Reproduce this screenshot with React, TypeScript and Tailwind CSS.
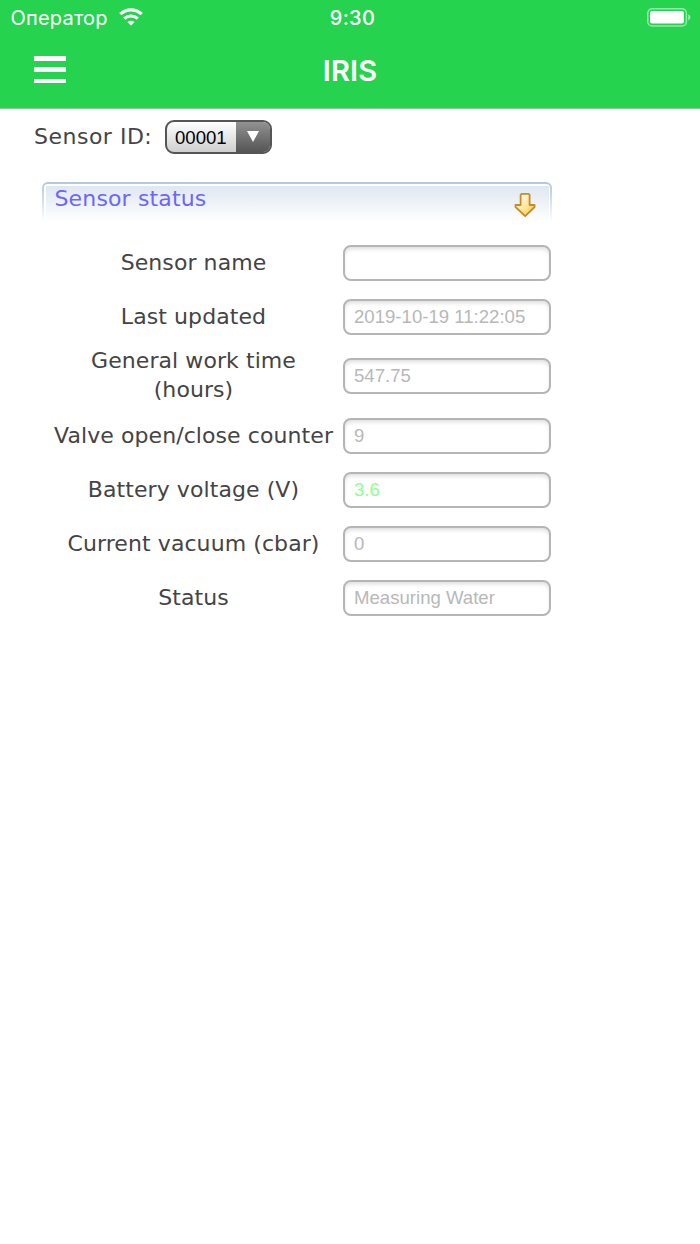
import clsx from 'clsx'

const FIELDS = [
  { label: 'Sensor name', value: '' },
  { label: 'Last updated', value: '2019-10-19 11:22:05' },
  { label: 'General work time (hours)', value: '547.75', tall: true },
  { label: 'Valve open/close counter', value: '9' },
  { label: 'Battery voltage (V)', value: '3.6', ok: true },
  { label: 'Current vacuum (cbar)', value: '0' },
  { label: 'Status', value: 'Measuring Water' },
]

function WifiIcon() {
  return (
    <svg className="ml-[11px] mt-2 h-[18px] w-6" viewBox="0 0 24 18" fill="none" stroke="#fff">
      <path d="M1.3 6.2C7.3.4 16.7.4 22.7 6.2" strokeWidth="3.2" />
      <path d="M5.2 10.7C9.1 7.1 14.9 7.1 18.8 10.7" strokeWidth="3.1" />
      <path d="M12 17.6 8.4 14C10.5 12.2 13.5 12.2 15.6 14Z" fill="#fff" stroke="none" />
    </svg>
  )
}

function BatteryIcon() {
  return (
    <svg className="mt-2 h-[19px] w-11" viewBox="0 0 44 19" fill="none">
      <rect x="0.8" y="0.8" width="38.6" height="17.2" rx="4.3" stroke="#fff" strokeOpacity="0.5" strokeWidth="1.5" />
      <rect x="3" y="3" width="34" height="12.5" rx="2" fill="#fff" />
      <path d="M41.3 6.2Q43.4 7.2 43.4 9.3T41.3 12.4Z" fill="#fff" fillOpacity="0.6" />
    </svg>
  )
}

function ArrowIcon() {
  return (
    <svg className="mr-3 mt-[6px] h-[26px] w-6" viewBox="0 0 24 26">
      <defs>
        <linearGradient id="arrow" x1="0" y1="0" x2="1" y2="1">
          <stop offset="0.2" stopColor="#fffbe2" />
          <stop offset="1" stopColor="#ffc83d" />
        </linearGradient>
      </defs>
      <path
        d="M7.6 2.8 8.6 1.8H15.6L16.6 2.8V13H21.6V15L12.2 24.2 2.5 15V13H7.6Z"
        fill="url(#arrow)"
        stroke="#c58c29"
        strokeWidth="1.8"
        strokeLinejoin="round"
      />
    </svg>
  )
}

function Header() {
  return (
    <header className="h-[109px] border-b border-[#8bc79b] bg-[#26d34f] font-['Inter',sans-serif] text-white">
      <div className="grid h-9 grid-cols-[1fr_auto_1fr]">
        <div className="flex pl-[10.5px]">
          <span className="text-[20px] leading-9 tracking-[0.2px]">Оператор</span>
          <WifiIcon />
        </div>
        <span className="pl-[5px] text-[20px] font-medium leading-9 tracking-[0.4px]">9:30</span>
        <div className="flex justify-end pr-[9px]">
          <BatteryIcon />
        </div>
      </div>
      <div className="grid h-[72px] grid-cols-[1fr_auto_1fr]">
        <button className="ml-[34px] mt-5 flex h-[27px] w-8 flex-col justify-between" aria-label="Menu">
          <span className="h-[4.5px] w-full bg-white" />
          <span className="h-[4.5px] w-full bg-white" />
          <span className="h-[4.5px] w-full bg-white" />
        </button>
        <h1 className="text-[29px] font-semibold leading-[70px] tracking-[0.2px]">IRIS</h1>
        <span />
      </div>
    </header>
  )
}

function SensorPicker() {
  return (
    <div className="flex h-[73px] pl-[34px] pt-[11px]">
      <span className="w-[131px] text-[22px] leading-[34px] tracking-[0.5px]">Sensor ID:</span>
      <button className="flex h-[34px] w-[107px] overflow-hidden rounded-[9px] border-2 border-[#555] bg-linear-to-b from-white to-[#cfcfcf] font-['Liberation_Sans',sans-serif] text-black">
        <span className="w-[69px] pl-2 text-left text-[18.6px] leading-[31px]">00001</span>
        <span className="flex h-full flex-1 items-center justify-center bg-linear-to-b from-[#929292] to-[#555]">
          <svg className="size-3" viewBox="0 0 12 12">
            <path d="M0 0H12L6 11Z" fill="#fff" />
          </svg>
        </span>
      </button>
    </div>
  )
}

export default function App() {
  return (
    <div className="min-h-[1244px] bg-white font-['DejaVu_Sans',sans-serif] text-[#444]">
      <Header />
      <SensorPicker />
      <section className="ml-[42px] w-[510px]">
        <div className="h-10 rounded-t-[6px] bg-linear-to-b from-[#b3c6db] to-white px-[2px] pt-[2px]">
          <div className="flex h-full justify-between rounded-t-[4px] bg-white px-[1.5px] pt-[1.5px]">
            <div className="flex h-full flex-1 justify-between bg-linear-to-b from-[#dfe7f1] to-white">
              <h2 className="pl-[9px] text-[22px] leading-[26px] tracking-[0.15px] text-[#6b66ff]">Sensor status</h2>
              <ArrowIcon />
            </div>
          </div>
        </div>
        <div className="pt-[14px]">
          {FIELDS.map(({ label, value, tall, ok }) => (
            <div key={label} className={clsx('flex items-center', tall ? 'mb-px h-[64px]' : 'h-[54px]')}>
              <label className="w-[301px] pb-0.5 pl-[11px] pr-[9px] text-center text-[22px] leading-[29px] tracking-[0.08px]">
                {label}
              </label>
              <div
                className={clsx(
                  "h-9 w-[208px] rounded-[8px] border-2 border-[#b5b5b5] px-[9px] font-['Liberation_Sans',sans-serif] text-[18.6px] leading-8 shadow-[inset_0_3px_4px_-1px_#ddd]",
                  ok ? 'text-[#90ff90]' : 'text-[#b8b8b8]',
                )}
              >
                {value}
              </div>
            </div>
          ))}
        </div>
      </section>
    </div>
  )
}
